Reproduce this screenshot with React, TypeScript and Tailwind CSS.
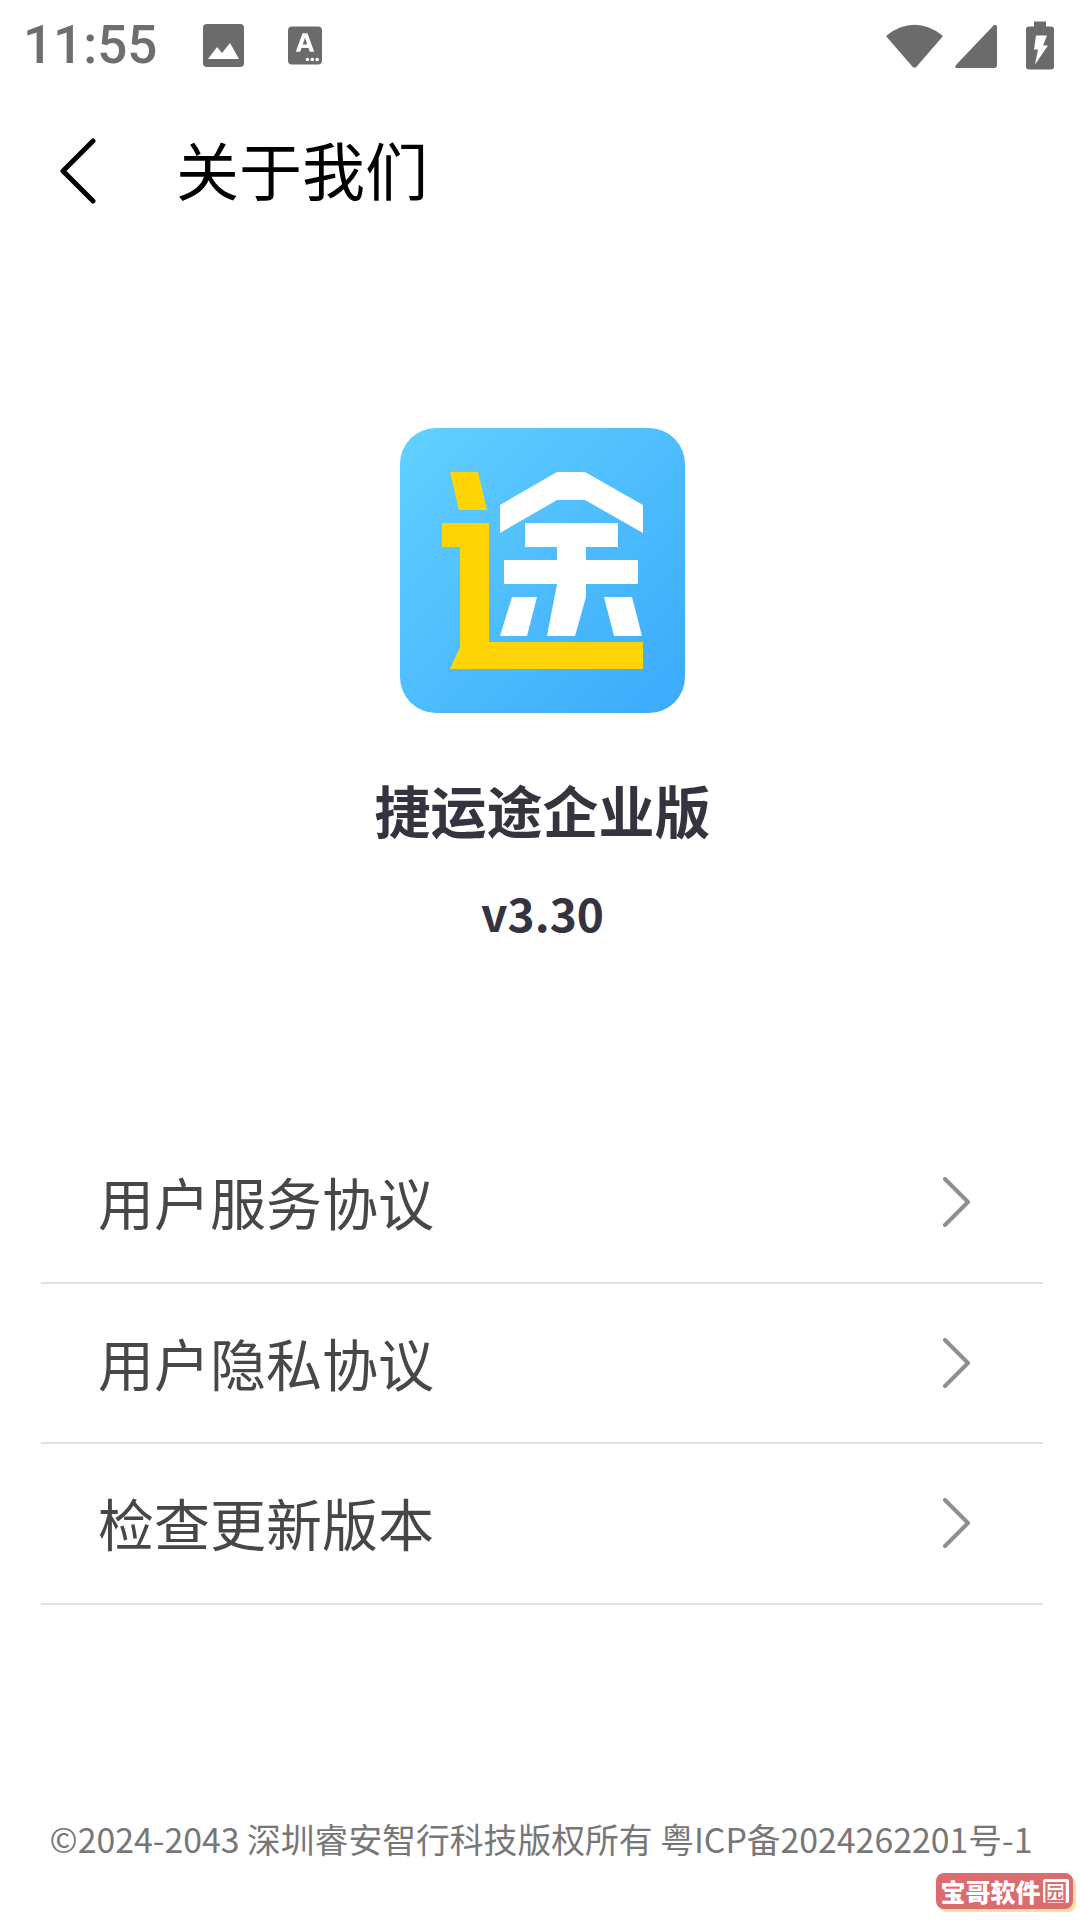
const cjk = "font-['Noto_Sans_CJK_SC','Noto_Sans',sans-serif]";

function Logo() {
  return (
    <div className="w-[285px] h-[285px] rounded-[36px] bg-gradient-to-br from-[#62d0ff] to-[#3aaafb] overflow-hidden">
      <svg width="285" height="285" viewBox="0 0 285 285">
        <g fill="#ffd505">
          <polygon points="50,44 78,44 87,82 59,82" />
          <polygon points="42,95 89,95 89,214 243,214 243,241 50,241 60,219 60,119 42,119" />
        </g>
        <g fill="#ffffff">
          <polygon points="100,77 157,44 185,44 243,77 243,105 185,72 157,72 100,105" />
          <polygon points="125,95 218,95 218,119 186,119 186,132 238,132 238,156 186,156 186,169 175,208 147,208 157,156 104,156 104,132 157,132 157,119 125,119" />
          <polygon points="112,169 137,169 127,208 100,208" />
          <polygon points="204,169 232,169 242,208 214,208" />
        </g>
      </svg>
    </div>
  );
}

function Row({ label }: { label: string }) {
  return (
    <div className="h-[160.5px] border-b-2 border-[#e2e2e2] flex items-center justify-between pl-[57px] pr-[72px]">
      <span className={`${cjk} text-[56px] leading-none text-[#474747] mb-[2px]`}>{label}</span>
      <svg width="30" height="50" viewBox="0 0 30 50" fill="none" stroke="#8f8f8f" strokeWidth="4" strokeLinecap="round" strokeLinejoin="round">
        <path d="M4 2 L27 25 L4 48" />
      </svg>
    </div>
  );
}

export default function App() {
  return (
    <div className="relative w-[1080px] h-[1920px] bg-white overflow-hidden flex flex-col">
      {/* status bar */}
      <div className="h-[92px] flex items-center justify-between pl-[23px] pr-[26px] pb-[1px]">
        <div className="flex items-center">
          <span className="font-['Roboto',sans-serif] font-medium text-[53px] leading-none text-[#6e6e6e]">11:55</span>
          <svg className="ml-[46px]" width="41" height="43" viewBox="0 0 41 43">
            <rect width="41" height="43" rx="4" fill="#6b6b6b" />
            <path d="M5 35 L14 23 L19 29 L27 19 L36 35 Z" fill="#ffffff" />
          </svg>
          <svg className="ml-[44px]" width="34" height="39" viewBox="0 0 35 39">
            <rect width="35" height="39" rx="4" fill="#6b6b6b" />
            <path d="M8 26 L15 7 H20 L27 26 H22.500 L21 22 H14 L12.500 26 Z M15.200 18.500 H19.800 L17.500 11.500 Z" fill="#ffffff" />
            <circle cx="20" cy="34" r="1.800" fill="#ffffff" />
            <circle cx="25" cy="34" r="1.800" fill="#ffffff" />
            <circle cx="30" cy="34" r="1.800" fill="#ffffff" />
          </svg>
        </div>
        <div className="flex items-center">
          <svg width="57" height="46" viewBox="0 0 58 46">
            <path d="M1 12 Q29 -9 57 12 Q58 13 57 14 L31 44 Q29 46 27 44 L1 14 Q0 13 1 12 Z" fill="#6b6b6b" />
          </svg>
          <svg className="ml-[11px]" width="44" height="44" viewBox="0 0 44 44">
            <path d="M40 1 Q43 0 43 4 V41 Q43 44 40 44 H3 Q0 44 2 41 Z" fill="#6b6b6b" />
          </svg>
          <svg className="ml-[28px]" width="28" height="49" viewBox="0 0 28 48">
            <path d="M8 0 H20 V5 H25 Q28 5 28 8 V45 Q28 48 25 48 H3 Q0 48 0 45 V8 Q0 5 3 5 H8 Z" fill="#6b6b6b" />
            <path d="M10 14 H21 L17 24 H22 L9 43 L12 28 H8 Z" fill="#ffffff" />
          </svg>
        </div>
      </div>

      {/* title bar */}
      <div className="h-[156px] flex items-center pl-[60px] pb-[4px]">
        <svg className="mt-[6px]" width="36" height="66" viewBox="0 0 36 66" fill="none" stroke="#000000" strokeWidth="5" strokeLinecap="round" strokeLinejoin="round">
          <path d="M33 3 L3 33 L33 63" />
        </svg>
        <h1 className={`${cjk} ml-[80px] mb-[2px] text-[63px] leading-none font-normal text-black`}>关于我们</h1>
      </div>

      {/* identity */}
      <div className="flex flex-col items-center pt-[180px] pl-[5px]">
        <Logo />
        <div className={`${cjk} mt-[61px] text-[56px] leading-[70px] font-bold text-[#353340]`}>捷运途企业版</div>
        <div className={`${cjk} mt-[32px] text-[46px] leading-[72px] font-bold text-[#353340]`}>v3.30</div>
      </div>

      {/* list */}
      <div className="mx-[41px] w-[1002px] mt-[175px]">
        <Row label="用户服务协议" />
        <Row label="用户隐私协议" />
        <Row label="检查更新版本" />
      </div>

      {/* footer */}
      <div className={`${cjk} absolute left-0 right-0 top-[1816px] pl-[2px] text-center text-[33.8px] leading-[46px] text-[#777777] whitespace-nowrap`}>
        ©2024-2043 深圳睿安智行科技版权所有 粤ICP备2024262201号-1
      </div>

      {/* watermark */}
      <div className={`${cjk} absolute left-[936px] top-[1873px] w-[137px] h-[36px] rounded-[8px] bg-[#dc6b70] shadow-[3px_3px_0_#fbe0a0] flex items-center justify-center gap-[2px] text-white`}>
        <span className="text-[25px] leading-none font-black whitespace-nowrap">宝哥软件</span>
        <span className="text-[24px] leading-none font-medium bg-white text-[#dc6b70] rounded-[2px] px-[1px]">园</span>
      </div>
    </div>
  );
}
